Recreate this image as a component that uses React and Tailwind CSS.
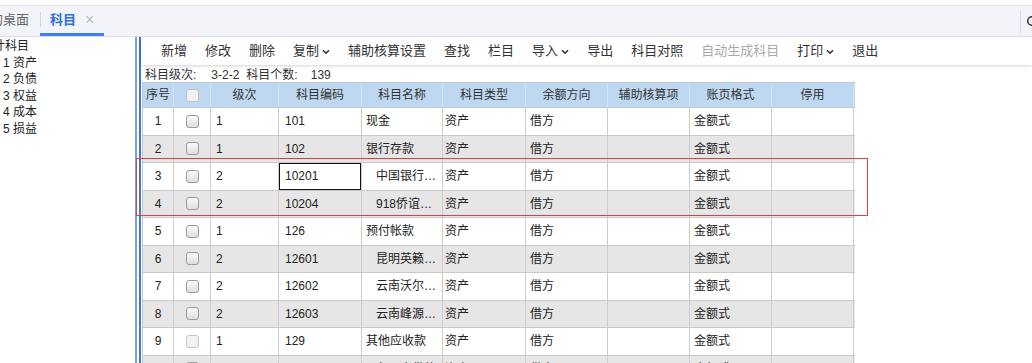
import React from 'react';

const cols = ['w-[31px]', 'w-[37px]', 'w-[68px]', 'w-[83px]', 'w-[81px]', 'w-[83px]', 'w-[82px]', 'w-[82px]', 'w-[82px]', 'w-[82px]'];
const heads = ['序号', '', '级次', '科目编码', '科目名称', '科目类型', '余额方向', '辅助核算项', '账页格式', '停用'];

const rows = [
  { no: 1, lv: 1, code: '101', name: '现金' },
  { no: 2, lv: 1, code: '102', name: '银行存款' },
  { no: 3, lv: 2, code: '10201', name: '中国银行昆明分行' },
  { no: 4, lv: 2, code: '10204', name: '918侨谊银行' },
  { no: 5, lv: 1, code: '126', name: '预付帐款' },
  { no: 6, lv: 2, code: '12601', name: '昆明英籁贸易公司' },
  { no: 7, lv: 2, code: '12602', name: '云南沃尔玛百货' },
  { no: 8, lv: 2, code: '12603', name: '云南峰源商贸' },
  { no: 9, lv: 1, code: '129', name: '其他应收款' },
  { no: 10, lv: 2, code: '12901', name: '备用金借款' },
];

const tools = [
  { t: '新增' }, { t: '修改' }, { t: '删除' }, { t: '复制', dd: true },
  { t: '辅助核算设置' }, { t: '查找' }, { t: '栏目' }, { t: '导入', dd: true },
  { t: '导出' }, { t: '科目对照' }, { t: '自动生成科目', off: true },
  { t: '打印', dd: true }, { t: '退出' },
];

const tree = ['1 资产', '2 负债', '3 权益', '4 成本', '5 损益'];

const Chevron = () => (
  <svg width="8" height="6" viewBox="0 0 8 6" className="ml-[3px] mt-[1px]">
    <path d="M1 1.2 L4 4.2 L7 1.2" fill="none" stroke="#333" strokeWidth="1.6" />
  </svg>
);

const Check = ({ light }) => (
  <span
    className={`inline-block w-[13px] h-[13px] rounded-[3px] border ${
      light ? 'border-[#c4c4c4] bg-[#f2f2f2]' : 'border-[#9c9c9c] bg-gradient-to-b from-[#fbfbfb] to-[#dedede]'
    }`}
  />
);

const App = () => {
  return (
    <div className="relative w-[1032px] h-[363px] overflow-hidden bg-white text-[#222] font-['Liberation_Sans','Noto_Sans_CJK_SC',sans-serif]">
      {/* top strip */}
      <div className="h-[6px] bg-white border-b border-[#e2e5eb]" />

      {/* tab bar */}
      <div className="relative h-[31px] bg-[#f2f4f9] border-b border-[#dcdfe6] flex items-stretch text-[13px]">
        <div className="flex items-center -ml-[10px] pb-[2px] text-[#666]">的桌面</div>
        <div className="flex items-center ml-[11px] pl-[10px] pr-[10px] border-b-[3px] border-[#3e7ff0] text-[#2f6fe4] font-bold">
          <span className="relative before:absolute before:-left-[10px] before:top-[2px] before:h-[15px] before:w-px before:bg-[#cfd4dd]">科目</span>
          <span className="ml-[9px] text-[16px] font-normal text-[#b8bcc4] leading-none">×</span>
        </div>
        <div className="absolute left-[1020px] top-[5px] h-[22px] w-px bg-[#d6dae2]" />
        <svg className="absolute left-[1026px] top-[9px]" width="14" height="14" viewBox="0 0 14 14">
          <circle cx="6" cy="6" r="4.3" fill="none" stroke="#333" strokeWidth="1.5" />
          <path d="M9.2 9.2 L12.5 12.5" stroke="#333" strokeWidth="1.5" />
        </svg>
      </div>

      <div className="flex h-[326px]">
        {/* left tree */}
        <div className="w-[135px] shrink-0 bg-white pt-[1px] text-[12px] leading-[16.5px] text-[#222]">
          <div className="-ml-[19px]">会计科目</div>
          {tree.map(t => (
            <div key={t} className="pl-[3px]">{t}</div>
          ))}
        </div>

        {/* splitter */}
        <div className="w-[6px] shrink-0 border-l-2 border-r-2 border-l-[#7f9fd4] border-r-[#3c77d6] bg-white" />

        {/* main */}
        <div className="flex-1 min-w-0">
          <div className="h-[28px] flex items-center pl-[11px] bg-white text-[13px] text-[#333] shadow-[0_1px_3px_rgba(0,0,0,0.18)]">
            {tools.map(b => (
              <div key={b.t} className={`flex items-center px-[9px] ${b.off ? 'text-[#a9a9a9]' : ''}`}>
                {b.t}
                {b.dd && <Chevron />}
              </div>
            ))}
          </div>

          <div className="h-[17px] flex items-center pl-[4px] pt-[3px] text-[12px] text-[#333]">
            <span>科目级次:</span>
            <span className="ml-[15px]">3-2-2</span>
            <span className="ml-[7px]">科目个数:</span>
            <span className="ml-[13px]">139</span>
          </div>

          {/* grid */}
          <div className="ml-[1px] w-[713px] border-l border-[#c6c6c6] text-[12px]">
            <div className="flex h-[26px] bg-[#bfd8f2] border-t border-b border-[#b9c9db] text-[#333]">
              {heads.map((h, i) => (
                <div key={i} className={`${cols[i]} shrink-0 flex items-center justify-center border-r border-[#d8e4f1]`}>
                  {i === 1 ? <Check light /> : h}
                </div>
              ))}
            </div>
            {rows.map((r, ri) => (
              <div
                key={r.no}
                className={`flex h-[27.5px] border-b border-[#c9c9c9] ${ri % 2 === 1 ? 'bg-[#e6e6e6]' : 'bg-white'}`}
              >
                <div className={`${cols[0]} shrink-0 flex items-center justify-center border-r border-[#cdcdcd]`}>{r.no}</div>
                <div className={`${cols[1]} shrink-0 flex items-center justify-center border-r border-[#cdcdcd]`}>
                  <Check light={r.no === 9} />
                </div>
                <div className={`${cols[2]} shrink-0 flex items-center pl-[5px] border-r border-[#cdcdcd]`}>{r.lv}</div>
                <div
                  className={`${cols[3]} shrink-0 flex items-center pl-[6px] border-r border-[#cdcdcd] ${
                    r.no === 3 ? 'shadow-[inset_0_0_0_1px_#111]' : ''
                  }`}
                >
                  {r.code}
                </div>
                <div
                  className={`${cols[4]} shrink-0 block truncate leading-[26.5px] border-r border-[#cdcdcd] pr-[4px] ${
                    r.lv === 2 ? 'pl-[14px]' : 'pl-[4px]'
                  }`}
                >
                  {r.name}
                </div>
                <div className={`${cols[5]} shrink-0 flex items-center pl-[2px] border-r border-[#cdcdcd]`}>资产</div>
                <div className={`${cols[6]} shrink-0 flex items-center pl-[4px] border-r border-[#cdcdcd]`}>借方</div>
                <div className={`${cols[7]} shrink-0 border-r border-[#cdcdcd]`} />
                <div className={`${cols[8]} shrink-0 flex items-center pl-[4px] border-r border-[#cdcdcd]`}>金额式</div>
                <div className={`${cols[9]} shrink-0 border-r border-[#cdcdcd]`} />
              </div>
            ))}
          </div>
        </div>
      </div>

      {/* annotation box */}
      <div className="absolute left-[136px] top-[158px] w-[732px] h-[58px] border border-[#e53d3d] pointer-events-none" />
    </div>
  );
};

export default App;
